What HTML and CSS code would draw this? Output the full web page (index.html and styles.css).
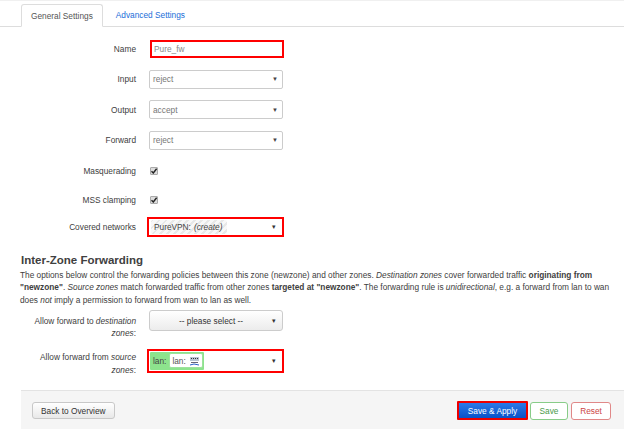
FILE: index.html
```html
<!DOCTYPE html>
<html>
<head>
<meta charset="utf-8">
<link rel="stylesheet" href="styles.css">
</head>
<body>
<div class="page">
  <ul class="tabs">
    <li class="tab active">General Settings</li>
    <li class="tab link">Advanced Settings</li>
  </ul>

  <div class="form">
    <div class="row">
      <div class="label">Name</div>
      <div class="input hl">Pure_fw</div>
    </div>
    <div class="row">
      <div class="label">Input</div>
      <div class="select"><span>reject</span><span class="arrow">▼</span></div>
    </div>
    <div class="row">
      <div class="label">Output</div>
      <div class="select"><span>accept</span><span class="arrow">▼</span></div>
    </div>
    <div class="row">
      <div class="label">Forward</div>
      <div class="select"><span>reject</span><span class="arrow">▼</span></div>
    </div>
    <div class="row">
      <div class="label">Masquerading</div>
      <div class="check"><svg viewBox="0 0 8 8" width="8" height="8"><path d="M1.5 4.2 L3.3 6 L6.6 1.8" fill="none" stroke="#222" stroke-width="1.4"/></svg></div>
    </div>
    <div class="row short">
      <div class="label">MSS clamping</div>
      <div class="check"><svg viewBox="0 0 8 8" width="8" height="8"><path d="M1.5 4.2 L3.3 6 L6.6 1.8" fill="none" stroke="#222" stroke-width="1.4"/></svg></div>
    </div>
    <div class="row short">
      <div class="label">Covered networks</div>
      <div class="multi hl covered">
        <span class="chip create">PureVPN: <i>(create)</i></span>
        <span class="arrow small">▾</span>
      </div>
    </div>
  </div>

  <h3 class="heading">Inter-Zone Forwarding</h3>
  <p class="desc">The options below control the forwarding policies between this zone (newzone) and other zones. <i>Destination zones</i> cover forwarded traffic <b>originating from "newzone"</b>. <i>Source zones</i> match forwarded traffic from other zones <b>targeted at "newzone"</b>. The forwarding rule is <i>unidirectional</i>, e.g. a forward from lan to wan does <i>not</i> imply a permission to forward from wan to lan as well.</p>

  <div class="form2">
    <div class="row2">
      <div class="label2">Allow forward to <i>destination zones</i>:</div>
      <div class="dropdown"><span class="placeholder">-- please select --</span><span class="arrow small">▾</span></div>
    </div>
    <div class="row2 src">
      <div class="label2">Allow forward from <i>source zones</i>:</div>
      <div class="multi hl source">
        <span class="green">lan:<span class="zchip">lan: <svg class="net" viewBox="0 0 11 10" width="11" height="10"><rect x="1" y="1" width="9" height="4" fill="#b8c4d4"/><rect x="2" y="2" width="1" height="1" fill="#333"/><rect x="4" y="2" width="1" height="1" fill="#333"/><rect x="6" y="2" width="1" height="1" fill="#333"/><rect x="8" y="2" width="1" height="1" fill="#333"/><rect x="2" y="6" width="7" height="1" fill="#667"/><path d="M1 9 L5 8 L10 9" stroke="#2a62c8" stroke-width="1" fill="none"/></svg></span></span>
        <span class="arrow small">▾</span>
      </div>
    </div>
  </div>

  <div class="actions">
    <button class="btn">Back to Overview</button>
    <div class="spacer"></div>
    <button class="btn apply">Save &amp; Apply</button>
    <button class="btn save">Save</button>
    <button class="btn reset">Reset</button>
  </div>
</div>
</body>
</html>
```

FILE: styles.css
```css
* { box-sizing: border-box; }

html, body {
  margin: 0;
  padding: 0;
  background: #fff;
}

body {
  font-family: "Liberation Sans", Arial, sans-serif;
  font-size: 8.3px;
  color: #404040;
  border-top: 1px solid #f0f0f0;
  width: 624px;
  height: 429px;
  overflow: hidden;
}

.tabs {
  list-style: none;
  margin: 0;
  padding: 3px 0 0 21px;
  display: flex;
  border-bottom: 1px solid #ddd;
  height: 26px;
}

.tab {
  height: 22px;
  display: flex;
  align-items: center;
  padding: 0 9px;
}

.tab.active {
  border: 1px solid #ddd;
  border-bottom-color: #fff;
  border-radius: 3px 3px 0 0;
  margin-bottom: -1px;
  height: 23px;
  color: #555;
  background: #fff;
}

.tab.link {
  margin-left: 4px;
  color: #1a6ed8;
}

.form {
  margin-top: 6.5px;
}

.row {
  display: grid;
  grid-template-columns: 136px 136px;
  column-gap: 13px;
  align-items: center;
  height: 30.5px;
}

.row.short {
  height: 27px;
}

.label {
  text-align: right;
  color: #404040;
}

.input {
  width: 134px;
  height: 18px;
  margin-left: 1px;
  display: flex;
  align-items: center;
  padding: 0 2px;
  color: #888;
}

.hl {
  border: 2px solid #f00;
}

.select {
  width: 134px;
  height: 19px;
  border: 1px solid #ccc;
  border-radius: 2px;
  display: flex;
  align-items: center;
  justify-content: space-between;
  padding: 0 4px 0 3px;
  color: #777;
  background: #fff;
}

.arrow {
  font-size: 6px;
  color: #444;
}

.arrow.small {
  font-size: 7px;
  color: #333;
}

.check {
  width: 8px;
  height: 8px;
  margin-left: 1px;
  background: #ddd;
  border: 1px solid #aaa;
  border-radius: 1px;
  display: flex;
  align-items: center;
  justify-content: center;
  overflow: hidden;
}

.check svg {
  flex: none;
}

.multi {
  width: 137px;
  margin-left: -2px;
  display: flex;
  align-items: center;
  justify-content: space-between;
  padding: 0 6px 0 2px;
  background: #fff;
}

.covered {
  height: 20px;
}

.chip.create {
  display: inline-flex;
  align-items: center;
  height: 14px;
  padding: 0 3px;
  color: #444;
  border-radius: 2px;
  background: repeating-linear-gradient(135deg, #e8e8e8 0 2px, #f8f8f8 2px 5px);
  width: 76px;
}

.chip.create i {
  margin-left: 3px;
}

.heading {
  margin: 13px 0 1.5px 21px;
  font-size: 11.5px;
  line-height: 14px;
  font-weight: bold;
  color: #404040;
}

.desc {
  margin: 0 6px 0 20px;
  line-height: 12.8px;
  color: #404040;
}

.form2 {
  margin-top: 3.5px;
}

.row2 {
  display: grid;
  grid-template-columns: 136px 137px;
  column-gap: 13px;
  align-items: start;
}

.row2.src {
  margin-top: 9px;
}

.label2 {
  text-align: right;
  line-height: 12.5px;
  padding: 4.5px 0 0 28px;
}

.row2.src .label2 {
  padding-top: 2.5px;
}

.dropdown {
  width: 134px;
  height: 21px;
  border: 1px solid #ccc;
  border-radius: 3px;
  background: linear-gradient(#fff, #ececec);
  display: flex;
  align-items: center;
  padding: 0 6px 0 0;
  color: #333;
}

.placeholder {
  flex: 1;
  text-align: center;
}

.source {
  height: 24px;
  padding-left: 1px;
}

.green {
  display: inline-flex;
  align-items: center;
  height: 18px;
  background: #8de38d;
  padding: 0 1px 0 3px;
  color: #444;
  border-radius: 1px;
}

.zchip {
  display: inline-flex;
  align-items: center;
  margin-left: 3px;
  height: 15px;
  padding: 0 2px 0 2px;
  background: #fff;
  border: 1px solid #9de29d;
  border-radius: 2px;
  color: #555;
}

.net {
  margin-left: 3px;
}

.actions {
  margin: 14px 0 0 21px;
  height: 60px;
  border-top: 1px solid #e3e3e3;
  background: #f5f5f5;
  display: flex;
  align-items: flex-start;
  padding: 10px 13px 0 11px;
}

.spacer {
  flex: 1;
}

.btn {
  font-family: "Liberation Sans", Arial, sans-serif;
  font-size: 8.3px;
  height: 17px;
  padding: 0 8px;
  margin-top: 1px;
  border: 1px solid #c8c8c8;
  border-radius: 3px;
  background: linear-gradient(#fff, #e8e8e8);
  color: #333;
}

.btn.apply {
  margin-top: 0;
  height: 19px;
  width: 71px;
  border: 2px solid #e00;
  border-radius: 1px;
  background: linear-gradient(#2a7ae8, #0a52c8);
  color: #fff;
}

.btn.save {
  height: 18px;
  margin-left: 2px;
  width: 38px;
  border-color: #88cc88;
  background: #fff;
  color: #4a9a4a;
}

.btn.reset {
  height: 18px;
  margin-left: 3px;
  width: 40px;
  border-color: #e08888;
  background: #fff;
  color: #c44;
}
```
